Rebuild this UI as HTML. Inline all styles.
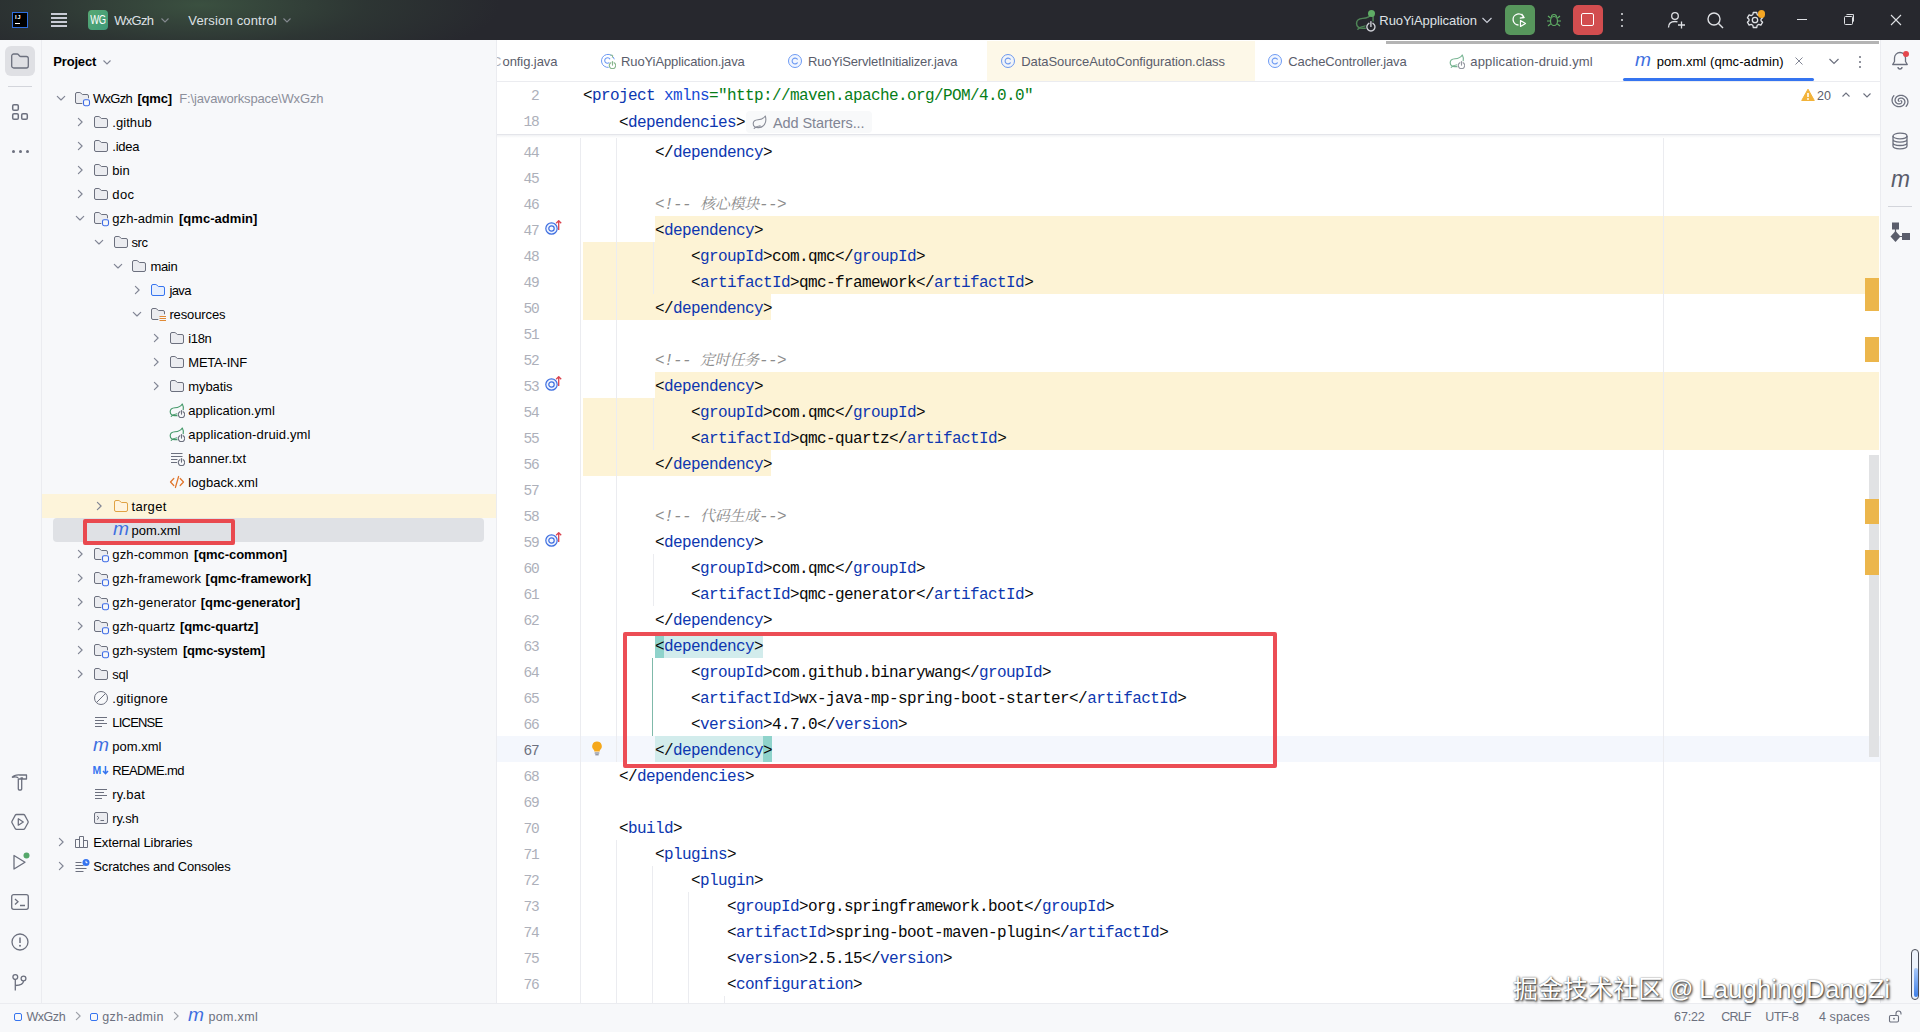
<!DOCTYPE html><html><head><meta charset="utf-8"><title>WxGzh – pom.xml (qmc-admin)</title><style>

html,body{margin:0;padding:0;}
body{width:1920px;height:1032px;overflow:hidden;position:relative;background:#f7f8fa;font-family:"Liberation Sans","Noto Sans CJK SC",sans-serif;font-size:13px;color:#000;}
.abs{position:absolute;}
.t{position:absolute;white-space:nowrap;line-height:24px;height:24px;margin-top:1px;}
svg{display:block;}
.ic{position:absolute;width:16px;height:16px;}
.row{position:absolute;left:0;height:24px;}
b{font-weight:bold;}
.code{position:absolute;left:583px;white-space:pre;font-family:"Liberation Mono","Noto Sans CJK SC",monospace;font-size:16px;letter-spacing:-0.600px;line-height:26px;height:26px;color:#080808;margin-top:2px;}
.ln{position:absolute;left:497px;width:41.500px;text-align:right;font-family:"Liberation Mono","Noto Sans CJK SC",monospace;font-size:14.500px;line-height:26px;height:26px;color:#adb0ba;letter-spacing:-1.200px;margin-top:2px;}
.cj{font-family:"Liberation Serif","Noto Serif CJK SC",serif;font-size:15px;letter-spacing:-0.250px;line-height:0;} .tg{color:#0d37b0;} .an{color:#174ad4;} .av{color:#067d17;} .cm{color:#8c8c8c;font-style:italic;}
.tab{position:absolute;top:50px;height:24px;line-height:24px;white-space:nowrap;color:#5a5d6b;}

</style></head><body>
<div class="abs" style="left:0;top:0;width:1920px;height:40px;background:#27282e;"></div>
<div class="abs" style="left:0;top:0;width:900px;height:40px;background:radial-gradient(ellipse 300px 70px at 200px 5px, rgba(78,120,82,0.500), rgba(66,100,70,0.220) 55%, rgba(39,40,46,0) 100%);"></div>
<div class="abs" style="left:12px;top:12px;width:14px;height:14px;background:#000;border:1px solid #2f6fe0;"></div>
<div class="abs" style="left:15px;top:14px;font:bold 6px/7px 'Liberation Sans',sans-serif;color:#fff;letter-spacing:0.500px;">IJ</div>
<div class="abs" style="left:15px;top:23px;width:5px;height:1px;background:#fff;"></div>
<div class="abs" style="left:51px;top:13px;width:16px;height:1.500px;background:#c9ccd6;"></div>
<div class="abs" style="left:51px;top:17px;width:16px;height:1.500px;background:#c9ccd6;"></div>
<div class="abs" style="left:51px;top:21px;width:16px;height:1.500px;background:#c9ccd6;"></div>
<div class="abs" style="left:51px;top:25px;width:16px;height:1.500px;background:#c9ccd6;"></div>
<div class="abs" style="left:88px;top:10px;width:20px;height:20px;border-radius:4px;background:linear-gradient(135deg,#57a873,#3f9a7a);"></div>
<div class="abs" style="left:88px;top:10px;width:20px;height:20px;line-height:20px;text-align:center;color:#fff;font-size:12px;letter-spacing:-0.500px;transform:scaleX(0.780);">WG</div>
<div class="t" style="left:114.300px;top:8px;color:#dfe1e5;"><span style="letter-spacing:-0.731px;">WxGzh</span></div>
<div class="ic" style="left:157px;top:12px;"><svg width="16" height="16" viewBox="0 0 16 16" ><path d='M4.500 6.500 L8 10 L11.500 6.500' fill='none' stroke='#868a91' stroke-width='1.100'/></svg></div>
<div class="t" style="left:188.300px;top:8px;color:#dfe1e5;"><span style="letter-spacing:0.171px;">Version control</span></div>
<div class="ic" style="left:279px;top:12px;"><svg width="16" height="16" viewBox="0 0 16 16" ><path d='M4.500 6.500 L8 10 L11.500 6.500' fill='none' stroke='#868a91' stroke-width='1.100'/></svg></div>
<div class="ic" style="left:1355px;top:11px;width:21px;height:21px;"><svg width="21" height="21" viewBox="0 0 16.500 16.500" ><path d="M13.300 2 C11.500 4.800 9 5.600 6 5.800 C3 6 1.200 7.600 1.200 9.800 C1.200 12.300 3.300 13.700 6 13.600 H9 M13.300 2 C14.300 3.800 14.600 5.800 14.200 7.800" fill="none" stroke="#4f8557" stroke-width="1.150" stroke-linecap="round" stroke-linejoin="round"/><path d="M2.200 14.400 C3.800 12.700 5.600 12 8.200 11.700" fill="none" stroke="#4f8557" stroke-width="1.050" stroke-linecap="round"/><circle cx="12.500" cy="12.400" r="4.300" fill="#27282e" stroke="none"/><path d="M10.900 9.700 a3.200 3.200 0 1 0 3.200 0" fill="none" stroke="#ced0d6" stroke-width="1.100" stroke-linecap="round"/><path d="M12.500 8.500 v3.600" stroke="#ced0d6" stroke-width="1.100" stroke-linecap="round"/></svg></div>
<div class="abs" style="left:1368px;top:9.500px;width:7px;height:7px;border-radius:50%;background:#5fad65;"></div>
<div class="t" style="left:1379.300px;top:8px;color:#dfe1e5;"><span style="letter-spacing:-0.055px;">RuoYiApplication</span></div>
<div class="ic" style="left:1479px;top:12px;"><svg width="16" height="16" viewBox="0 0 16 16" ><path d='M3.500 6 L8 10.500 L12.500 6' fill='none' stroke='#c9ccd6' stroke-width='1.200'/></svg></div>
<div class="abs" style="left:1505px;top:5px;width:30px;height:30px;border-radius:5px;background:#57965c;"></div>
<div class="ic" style="left:1511px;top:11px;width:18px;height:18px;"><svg width="18" height="18" viewBox="0 0 18 18" ><path d='M7.500 14 a5.500 5.500 0 1 1 5.200 -7.500' fill='none' stroke='#fff' stroke-width='1.300'/><path d='M10.500 2.800 l2.600 3.700 l-4.300 .6' fill='none' stroke='#fff' stroke-width='1.300' stroke-linejoin='round'/><path d='M9.500 9.500 v6 l5 -3 z' fill='#57965c' stroke='#fff' stroke-width='1.200' stroke-linejoin='round'/></svg></div>
<div class="ic" style="left:1546px;top:12px;"><svg width="16" height="16" viewBox="0 0 16 16" ><ellipse cx='8' cy='9' rx='3.500' ry='4.500' fill='none' stroke='#5fad65' stroke-width='1.200'/><path d='M5.500 5 a2.500 2.500 0 0 1 5 0 M1 9 h3.500 M11.500 9 h3.500 M2 4 l2.800 2.300 M14 4 l-2.800 2.300 M2 14 l2.800 -2.300 M14 14 l-2.800 -2.300' fill='none' stroke='#5fad65' stroke-width='1.200'/></svg></div>
<div class="abs" style="left:1573px;top:5px;width:30px;height:30px;border-radius:5px;background:#d24d4f;"></div>
<div class="abs" style="left:1581px;top:13px;width:11px;height:11px;border:1.500px solid #fff;border-radius:2px;"></div>
<div class="abs" style="left:1621px;top:13px;width:2px;height:2px;border-radius:50%;background:#dfe1e5;"></div>
<div class="abs" style="left:1621px;top:19px;width:2px;height:2px;border-radius:50%;background:#dfe1e5;"></div>
<div class="abs" style="left:1621px;top:25px;width:2px;height:2px;border-radius:50%;background:#dfe1e5;"></div>
<div class="ic" style="left:1666px;top:10px;width:20px;height:20px;"><svg width="20" height="20" viewBox="0 0 20 20" ><circle cx='9' cy='6' r='3.300' fill='none' stroke='#dfe1e5' stroke-width='1.300'/><path d='M2.500 17.500 c0 -4 2.800 -6 6.500 -6 c1 0 1.800 .15 2.500 .4' fill='none' stroke='#dfe1e5' stroke-width='1.300'/><path d='M15.500 11.500 v7 M12 15 h7' stroke='#dfe1e5' stroke-width='1.300'/></svg></div>
<div class="ic" style="left:1705px;top:10px;width:20px;height:20px;"><svg width="20" height="20" viewBox="0 0 20 20" ><circle cx='9' cy='9' r='6' fill='none' stroke='#dfe1e5' stroke-width='1.400'/><path d='M13.500 13.500 L18 18' stroke='#dfe1e5' stroke-width='1.400'/></svg></div>
<div class="ic" style="left:1745px;top:10px;width:20px;height:20px;"><svg width="20" height="20" viewBox="0 0 20 20" ><circle cx='10' cy='10' r='2.700' fill='none' stroke='#dfe1e5' stroke-width='1.300'/><path d='M8.300 2.500 h3.400 l.5 2.200 l1.600 .9 l2.100 -.7 l1.700 2.900 l-1.600 1.500 v1.400 l1.600 1.500 l-1.700 2.900 l-2.100 -.7 l-1.600 .9 l-.5 2.200 h-3.400 l-.5 -2.200 l-1.600 -.9 l-2.100 .7 l-1.700 -2.900 l1.600 -1.500 v-1.400 l-1.600 -1.500 l1.700 -2.900 l2.100 .7 l1.600 -.9 z' fill='none' stroke='#dfe1e5' stroke-width='1.300' stroke-linejoin='round'/></svg></div>
<div class="abs" style="left:1757.500px;top:10px;width:7.500px;height:7.500px;border-radius:50%;background:#f5a623;"></div>
<div class="abs" style="left:1797px;top:19px;width:10px;height:1px;background:#dfe1e5;"></div>
<div class="abs" style="left:1844px;top:16px;width:7px;height:7px;border:1px solid #dfe1e5;border-radius:1.500px;"></div>
<div class="abs" style="left:1846px;top:14px;width:7px;height:7px;border-top:1px solid #dfe1e5;border-right:1px solid #dfe1e5;border-radius:1.500px;"></div>
<div class="ic" style="left:1888px;top:12px;"><svg width="16" height="16" viewBox="0 0 16 16" ><path d='M3 3 L13 13 M13 3 L3 13' stroke='#dfe1e5' stroke-width='1.100'/></svg></div>
<div class="abs" style="left:41px;top:40px;width:1px;height:963px;background:#ebecf0;"></div>
<div class="abs" style="left:5px;top:46px;width:30px;height:30px;border-radius:6px;background:#dfe0e4;"></div>
<div class="ic" style="left:10px;top:51px;width:20px;height:20px;"><svg width="20" height="20" viewBox="0 0 20 20" ><path d='M1.700 5 a2 2 0 0 1 2 -2 h3.500 a1.500 1.500 0 0 1 1.100 .5 l1.300 1.500 a1.500 1.500 0 0 0 1.100 .5 h5.600 a2 2 0 0 1 2 2 v7.500 a2 2 0 0 1 -2 2 h-12.600 a2 2 0 0 1 -2 -2 z' fill='none' stroke='#6c707e' stroke-width='1.300'/></svg></div>
<div class="abs" style="left:8px;top:86px;width:24px;height:1px;background:#d3d5db;"></div>
<div class="ic" style="left:10px;top:102px;width:20px;height:20px;"><svg width="20" height="20" viewBox="0 0 20 20" ><rect x='2.700' y='2.700' width='5.600' height='5.600' rx='1.300' fill='none' stroke='#6c707e' stroke-width='1.500'/><rect x='2.700' y='11.700' width='5.600' height='5.600' rx='1.300' fill='none' stroke='#6c707e' stroke-width='1.500'/><rect x='11.700' y='11.700' width='5.600' height='5.600' rx='1.300' fill='none' stroke='#6c707e' stroke-width='1.500'/></svg></div>
<div class="abs" style="left:11.7px;top:150.200px;width:3.200px;height:3.200px;border-radius:50%;background:#6c707e;"></div>
<div class="abs" style="left:18.7px;top:150.200px;width:3.200px;height:3.200px;border-radius:50%;background:#6c707e;"></div>
<div class="abs" style="left:25.7px;top:150.200px;width:3.200px;height:3.200px;border-radius:50%;background:#6c707e;"></div>
<div class="ic" style="left:10px;top:772px;width:20px;height:20px;"><svg width="20" height="20" viewBox="0 0 20 20" ><path d='M2 5.500 c2 -2.300 5 -2.800 8 -2.500 h6.500 v4 h-4 v-1.200 h-2 M8.300 7 h3.400 v10 a1 1 0 0 1 -1 1 h-1.400 a1 1 0 0 1 -1 -1 z M2 5.500 c2.500 -1 4.500 -.8 6.300 .2' fill='none' stroke='#6c707e' stroke-width='1.300' stroke-linejoin='round'/></svg></div>
<div class="ic" style="left:10px;top:812px;width:20px;height:20px;"><svg width="20" height="20" viewBox="0 0 20 20" ><path d='M6.500 2.500 h7 a1.500 1.500 0 0 1 1.200 .7 l3.300 6 a1.500 1.500 0 0 1 0 1.500 l-3.300 6 a1.500 1.500 0 0 1 -1.200 .7 h-7 a1.500 1.500 0 0 1 -1.200 -.7 l-3.300 -6 a1.500 1.500 0 0 1 0 -1.500 l3.300 -6 a1.500 1.500 0 0 1 1.200 -.7 z' fill='none' stroke='#6c707e' stroke-width='1.300'/><path d='M8.300 6.800 v6.400 l5 -3.200 z' fill='none' stroke='#6c707e' stroke-width='1.300' stroke-linejoin='round'/></svg></div>
<div class="ic" style="left:10px;top:852px;width:20px;height:20px;"><svg width="20" height="20" viewBox="0 0 20 20" ><path d='M4 3.500 v13.500 l11 -6.800 z' fill='none' stroke='#6c707e' stroke-width='1.300' stroke-linejoin='round'/><circle cx='16.500' cy='3.500' r='3' fill='#55a76a'/></svg></div>
<div class="ic" style="left:10px;top:892px;width:20px;height:20px;"><svg width="20" height="20" viewBox="0 0 20 20" ><rect x='1.700' y='2.700' width='16.600' height='14.600' rx='2' fill='none' stroke='#6c707e' stroke-width='1.300'/><path d='M5 7 l3 2.800 l-3 2.800 M10 13.500 h5' fill='none' stroke='#6c707e' stroke-width='1.300'/></svg></div>
<div class="ic" style="left:10px;top:932px;width:20px;height:20px;"><svg width="20" height="20" viewBox="0 0 20 20" ><circle cx='10' cy='10' r='8' fill='none' stroke='#6c707e' stroke-width='1.300'/><path d='M10 5.500 v5.500' stroke='#6c707e' stroke-width='1.500'/><circle cx='10' cy='13.800' r='1' fill='#6c707e'/></svg></div>
<div class="ic" style="left:10px;top:972px;width:20px;height:20px;"><svg width="20" height="20" viewBox="0 0 20 20" ><circle cx='5.300' cy='5' r='2.400' fill='none' stroke='#6c707e' stroke-width='1.300'/><circle cx='13.500' cy='6.500' r='2.400' fill='none' stroke='#6c707e' stroke-width='1.300'/><path d='M5.300 7.400 v11 M13.500 8.900 c0 3.200 -3.500 4.300 -8.200 4.600' fill='none' stroke='#6c707e' stroke-width='1.300'/></svg></div>
<div class="t" style="left:53.300px;top:49px;color:#000;"><span style="letter-spacing:-0.180px;font-weight:bold;">Project</span></div>
<div class="ic" style="left:99px;top:54px;"><svg width="16" height="16" viewBox="0 0 16 16" ><path d='M4.500 6.500 L8 10 L11.500 6.500' fill='none' stroke='#818594' stroke-width='1.100'/></svg></div>
<div class="abs" style="left:42px;top:494px;width:454px;height:24px;background:#fdf4da;"></div>
<div class="abs" style="left:53px;top:518px;width:431px;height:24px;border-radius:4px;background:#dfe1e5;"></div>
<div class="ic" style="left:53px;top:90px;"><svg width="16" height="16" viewBox="0 0 16 16" ><path d="M4.300 6.300 L8 10 L11.700 6.300" fill="none" stroke="#818594" stroke-width="1.150" stroke-linecap="round" stroke-linejoin="round"/></svg></div>
<div class="ic" style="left:74px;top:90px;"><svg width="17" height="17" viewBox="0 0 17 17" ><path d="M8.3 13.5 H3 a1.5 1.5 0 0 1 -1.5 -1.5 V4 a1.5 1.5 0 0 1 1.5 -1.5 h2.9 a1 1 0 0 1 .75 .33 l1.2 1.37 a1 1 0 0 0 .75 .3 h4.4 a1.5 1.5 0 0 1 1.5 1.5 V8.300" fill="#ebecf0" stroke="#6c707e"/><rect x="9.500" y="9.700" width="6" height="6" rx="1.600" fill="#f7f8fa" stroke="#3d6be6" stroke-width="1.100"/></svg></div>
<div class="t" style="left:93px;top:86px;"><span style="letter-spacing:-0.706px;">WxGzh</span><span style="position:absolute;left:44.4px;top:0;"><span style="letter-spacing:-0.198px;font-weight:bold;">[qmc]</span></span><span style="position:absolute;left:86.3px;top:0;color:#8c8f9b;"><span style="letter-spacing:-0.151px;">F:\javaworkspace\WxGzh</span></span></div>
<div class="ic" style="left:72px;top:114px;"><svg width="16" height="16" viewBox="0 0 16 16" ><path d="M6.400 4.300 L10.100 8 L6.400 11.700" fill="none" stroke="#818594" stroke-width="1.150" stroke-linecap="round" stroke-linejoin="round"/></svg></div>
<div class="ic" style="left:93px;top:114px;"><svg width="16" height="16" viewBox="0 0 16 16" ><path d="M1.5 4 a1.5 1.5 0 0 1 1.5 -1.5 h2.9 a1 1 0 0 1 .75 .33 l1.2 1.37 a1 1 0 0 0 .75 .3 h4.4 a1.5 1.5 0 0 1 1.5 1.5 v6 a1.5 1.5 0 0 1 -1.5 1.5 h-10 a1.5 1.5 0 0 1 -1.5 -1.5 z" fill="#ebecf0" stroke="#6c707e" stroke-width="1"/></svg></div>
<div class="t" style="left:112.3px;top:110px;"><span style="letter-spacing:0.059px;">.github</span></div>
<div class="ic" style="left:72px;top:138px;"><svg width="16" height="16" viewBox="0 0 16 16" ><path d="M6.400 4.300 L10.100 8 L6.400 11.700" fill="none" stroke="#818594" stroke-width="1.150" stroke-linecap="round" stroke-linejoin="round"/></svg></div>
<div class="ic" style="left:93px;top:138px;"><svg width="16" height="16" viewBox="0 0 16 16" ><path d="M1.5 4 a1.5 1.5 0 0 1 1.5 -1.5 h2.9 a1 1 0 0 1 .75 .33 l1.2 1.37 a1 1 0 0 0 .75 .3 h4.4 a1.5 1.5 0 0 1 1.5 1.5 v6 a1.5 1.5 0 0 1 -1.5 1.5 h-10 a1.5 1.5 0 0 1 -1.5 -1.5 z" fill="#ebecf0" stroke="#6c707e" stroke-width="1"/></svg></div>
<div class="t" style="left:112.3px;top:134px;"><span style="letter-spacing:-0.226px;">.idea</span></div>
<div class="ic" style="left:72px;top:162px;"><svg width="16" height="16" viewBox="0 0 16 16" ><path d="M6.400 4.300 L10.100 8 L6.400 11.700" fill="none" stroke="#818594" stroke-width="1.150" stroke-linecap="round" stroke-linejoin="round"/></svg></div>
<div class="ic" style="left:93px;top:162px;"><svg width="16" height="16" viewBox="0 0 16 16" ><path d="M1.5 4 a1.5 1.5 0 0 1 1.5 -1.5 h2.9 a1 1 0 0 1 .75 .33 l1.2 1.37 a1 1 0 0 0 .75 .3 h4.4 a1.5 1.5 0 0 1 1.5 1.5 v6 a1.5 1.5 0 0 1 -1.5 1.5 h-10 a1.5 1.5 0 0 1 -1.5 -1.5 z" fill="#ebecf0" stroke="#6c707e" stroke-width="1"/></svg></div>
<div class="t" style="left:112.3px;top:158px;"><span style="letter-spacing:0.020px;">bin</span></div>
<div class="ic" style="left:72px;top:186px;"><svg width="16" height="16" viewBox="0 0 16 16" ><path d="M6.400 4.300 L10.100 8 L6.400 11.700" fill="none" stroke="#818594" stroke-width="1.150" stroke-linecap="round" stroke-linejoin="round"/></svg></div>
<div class="ic" style="left:93px;top:186px;"><svg width="16" height="16" viewBox="0 0 16 16" ><path d="M1.5 4 a1.5 1.5 0 0 1 1.5 -1.5 h2.9 a1 1 0 0 1 .75 .33 l1.2 1.37 a1 1 0 0 0 .75 .3 h4.4 a1.5 1.5 0 0 1 1.5 1.5 v6 a1.5 1.5 0 0 1 -1.5 1.5 h-10 a1.5 1.5 0 0 1 -1.5 -1.5 z" fill="#ebecf0" stroke="#6c707e" stroke-width="1"/></svg></div>
<div class="t" style="left:112.3px;top:182px;"><span style="letter-spacing:0.366px;">doc</span></div>
<div class="ic" style="left:72px;top:210px;"><svg width="16" height="16" viewBox="0 0 16 16" ><path d="M4.300 6.300 L8 10 L11.700 6.300" fill="none" stroke="#818594" stroke-width="1.150" stroke-linecap="round" stroke-linejoin="round"/></svg></div>
<div class="ic" style="left:93px;top:210px;"><svg width="17" height="17" viewBox="0 0 17 17" ><path d="M8.3 13.5 H3 a1.5 1.5 0 0 1 -1.5 -1.5 V4 a1.5 1.5 0 0 1 1.5 -1.5 h2.9 a1 1 0 0 1 .75 .33 l1.2 1.37 a1 1 0 0 0 .75 .3 h4.4 a1.5 1.5 0 0 1 1.5 1.5 V8.300" fill="#ebecf0" stroke="#6c707e"/><rect x="9.500" y="9.700" width="6" height="6" rx="1.600" fill="#f7f8fa" stroke="#3d6be6" stroke-width="1.100"/></svg></div>
<div class="t" style="left:112.3px;top:206px;"><span style="letter-spacing:0.050px;">gzh-admin</span><span style="position:absolute;left:66.7px;top:0;"><span style="letter-spacing:0.040px;font-weight:bold;">[qmc-admin]</span></span></div>
<div class="ic" style="left:91px;top:234px;"><svg width="16" height="16" viewBox="0 0 16 16" ><path d="M4.300 6.300 L8 10 L11.700 6.300" fill="none" stroke="#818594" stroke-width="1.150" stroke-linecap="round" stroke-linejoin="round"/></svg></div>
<div class="ic" style="left:113px;top:234px;"><svg width="16" height="16" viewBox="0 0 16 16" ><path d="M1.5 4 a1.5 1.5 0 0 1 1.5 -1.5 h2.9 a1 1 0 0 1 .75 .33 l1.2 1.37 a1 1 0 0 0 .75 .3 h4.4 a1.5 1.5 0 0 1 1.5 1.5 v6 a1.5 1.5 0 0 1 -1.5 1.5 h-10 a1.5 1.5 0 0 1 -1.5 -1.5 z" fill="#ebecf0" stroke="#6c707e" stroke-width="1"/></svg></div>
<div class="t" style="left:131.5px;top:230px;"><span style="letter-spacing:-0.422px;">src</span></div>
<div class="ic" style="left:110px;top:258px;"><svg width="16" height="16" viewBox="0 0 16 16" ><path d="M4.300 6.300 L8 10 L11.700 6.300" fill="none" stroke="#818594" stroke-width="1.150" stroke-linecap="round" stroke-linejoin="round"/></svg></div>
<div class="ic" style="left:131px;top:258px;"><svg width="16" height="16" viewBox="0 0 16 16" ><path d="M1.5 4 a1.5 1.5 0 0 1 1.5 -1.5 h2.9 a1 1 0 0 1 .75 .33 l1.2 1.37 a1 1 0 0 0 .75 .3 h4.4 a1.5 1.5 0 0 1 1.5 1.5 v6 a1.5 1.5 0 0 1 -1.5 1.5 h-10 a1.5 1.5 0 0 1 -1.5 -1.5 z" fill="#ebecf0" stroke="#6c707e" stroke-width="1"/></svg></div>
<div class="t" style="left:150.4px;top:254px;"><span style="letter-spacing:-0.296px;">main</span></div>
<div class="ic" style="left:129px;top:282px;"><svg width="16" height="16" viewBox="0 0 16 16" ><path d="M6.400 4.300 L10.100 8 L6.400 11.700" fill="none" stroke="#818594" stroke-width="1.150" stroke-linecap="round" stroke-linejoin="round"/></svg></div>
<div class="ic" style="left:150px;top:282px;"><svg width="16" height="16" viewBox="0 0 16 16" ><path d="M1.5 4 a1.5 1.5 0 0 1 1.5 -1.5 h2.9 a1 1 0 0 1 .75 .33 l1.2 1.37 a1 1 0 0 0 .75 .3 h4.4 a1.5 1.5 0 0 1 1.5 1.5 v6 a1.5 1.5 0 0 1 -1.5 1.5 h-10 a1.5 1.5 0 0 1 -1.5 -1.5 z" fill="#e7effd" stroke="#3574f0" stroke-width="1"/></svg></div>
<div class="t" style="left:169.4px;top:278px;"><span style="letter-spacing:-0.620px;">java</span></div>
<div class="ic" style="left:129px;top:306px;"><svg width="16" height="16" viewBox="0 0 16 16" ><path d="M4.300 6.300 L8 10 L11.700 6.300" fill="none" stroke="#818594" stroke-width="1.150" stroke-linecap="round" stroke-linejoin="round"/></svg></div>
<div class="ic" style="left:150px;top:306px;"><svg width="17" height="17" viewBox="0 0 17 17" ><path d="M8.3 13.5 H3 a1.5 1.5 0 0 1 -1.5 -1.5 V4 a1.5 1.5 0 0 1 1.5 -1.5 h2.9 a1 1 0 0 1 .75 .33 l1.2 1.37 a1 1 0 0 0 .75 .3 h4.4 a1.5 1.5 0 0 1 1.5 1.5 V8.300" fill="#ebecf0" stroke="#6c707e"/><path d="M9.500 10.500 h6.500 M9.500 12.500 h6.500 M9.500 14.500 h6.500" stroke="#e08a35" stroke-width="1.100"/></svg></div>
<div class="t" style="left:169.4px;top:302px;"><span style="letter-spacing:-0.122px;">resources</span></div>
<div class="ic" style="left:148px;top:330px;"><svg width="16" height="16" viewBox="0 0 16 16" ><path d="M6.400 4.300 L10.100 8 L6.400 11.700" fill="none" stroke="#818594" stroke-width="1.150" stroke-linecap="round" stroke-linejoin="round"/></svg></div>
<div class="ic" style="left:169px;top:330px;"><svg width="16" height="16" viewBox="0 0 16 16" ><path d="M1.5 4 a1.5 1.5 0 0 1 1.5 -1.5 h2.9 a1 1 0 0 1 .75 .33 l1.2 1.37 a1 1 0 0 0 .75 .3 h4.4 a1.5 1.5 0 0 1 1.5 1.5 v6 a1.5 1.5 0 0 1 -1.5 1.5 h-10 a1.5 1.5 0 0 1 -1.5 -1.5 z" fill="#ebecf0" stroke="#6c707e" stroke-width="1"/></svg></div>
<div class="t" style="left:188.3px;top:326px;"><span style="letter-spacing:-0.359px;">i18n</span></div>
<div class="ic" style="left:148px;top:354px;"><svg width="16" height="16" viewBox="0 0 16 16" ><path d="M6.400 4.300 L10.100 8 L6.400 11.700" fill="none" stroke="#818594" stroke-width="1.150" stroke-linecap="round" stroke-linejoin="round"/></svg></div>
<div class="ic" style="left:169px;top:354px;"><svg width="16" height="16" viewBox="0 0 16 16" ><path d="M1.5 4 a1.5 1.5 0 0 1 1.5 -1.5 h2.9 a1 1 0 0 1 .75 .33 l1.2 1.37 a1 1 0 0 0 .75 .3 h4.4 a1.5 1.5 0 0 1 1.5 1.5 v6 a1.5 1.5 0 0 1 -1.5 1.5 h-10 a1.5 1.5 0 0 1 -1.5 -1.5 z" fill="#ebecf0" stroke="#6c707e" stroke-width="1"/></svg></div>
<div class="t" style="left:188.3px;top:350px;"><span style="letter-spacing:-0.217px;">META-INF</span></div>
<div class="ic" style="left:148px;top:378px;"><svg width="16" height="16" viewBox="0 0 16 16" ><path d="M6.400 4.300 L10.100 8 L6.400 11.700" fill="none" stroke="#818594" stroke-width="1.150" stroke-linecap="round" stroke-linejoin="round"/></svg></div>
<div class="ic" style="left:169px;top:378px;"><svg width="16" height="16" viewBox="0 0 16 16" ><path d="M1.5 4 a1.5 1.5 0 0 1 1.5 -1.5 h2.9 a1 1 0 0 1 .75 .33 l1.2 1.37 a1 1 0 0 0 .75 .3 h4.4 a1.5 1.5 0 0 1 1.5 1.5 v6 a1.5 1.5 0 0 1 -1.5 1.5 h-10 a1.5 1.5 0 0 1 -1.5 -1.5 z" fill="#ebecf0" stroke="#6c707e" stroke-width="1"/></svg></div>
<div class="t" style="left:188.3px;top:374px;"><span style="letter-spacing:-0.083px;">mybatis</span></div>
<div class="ic" style="left:169px;top:402px;"><svg width="16" height="16" viewBox="0 0 16 16" ><path d="M13.300 2 C11.500 4.800 9 5.600 6 5.800 C3 6 1.200 7.600 1.200 9.800 C1.200 12.300 3.300 13.700 6 13.600 H9 M13.300 2 C14.300 3.800 14.600 5.800 14.200 7.800" fill="none" stroke="#45996a" stroke-width="1.150" stroke-linecap="round" stroke-linejoin="round"/><path d="M2.200 14.400 C3.800 12.700 5.600 12 8.200 11.700" fill="none" stroke="#45996a" stroke-width="1.050" stroke-linecap="round"/><circle cx="12.500" cy="12.400" r="4.300" fill="#f7f8fa" stroke="none"/><path d="M10.900 9.700 a3.200 3.200 0 1 0 3.200 0" fill="none" stroke="#6c707e" stroke-width="1.100" stroke-linecap="round"/><path d="M12.500 8.500 v3.600" stroke="#6c707e" stroke-width="1.100" stroke-linecap="round"/></svg></div>
<div class="t" style="left:188.3px;top:398px;"><span style="letter-spacing:0.036px;">application.yml</span></div>
<div class="ic" style="left:169px;top:426px;"><svg width="16" height="16" viewBox="0 0 16 16" ><path d="M13.300 2 C11.500 4.800 9 5.600 6 5.800 C3 6 1.200 7.600 1.200 9.800 C1.200 12.300 3.300 13.700 6 13.600 H9 M13.300 2 C14.300 3.800 14.600 5.800 14.200 7.800" fill="none" stroke="#45996a" stroke-width="1.150" stroke-linecap="round" stroke-linejoin="round"/><path d="M2.200 14.400 C3.800 12.700 5.600 12 8.200 11.700" fill="none" stroke="#45996a" stroke-width="1.050" stroke-linecap="round"/><circle cx="12.500" cy="12.400" r="4.300" fill="#f7f8fa" stroke="none"/><path d="M10.900 9.700 a3.200 3.200 0 1 0 3.200 0" fill="none" stroke="#6c707e" stroke-width="1.100" stroke-linecap="round"/><path d="M12.500 8.500 v3.600" stroke="#6c707e" stroke-width="1.100" stroke-linecap="round"/></svg></div>
<div class="t" style="left:188.3px;top:422px;"><span style="letter-spacing:0.148px;">application-druid.yml</span></div>
<div class="ic" style="left:169px;top:450px;"><svg width="16" height="16" viewBox="0 0 16 16" ><path d="M2 3.500 h11.500 M2 6.500 h11.500 M2 9.500 h6.500 M2 12.500 h6" stroke="#6c707e" stroke-width="1"/><circle cx="12.500" cy="12.400" r="4.300" fill="#f7f8fa" stroke="none"/><path d="M10.900 9.700 a3.200 3.200 0 1 0 3.200 0" fill="none" stroke="#6c707e" stroke-width="1.100" stroke-linecap="round"/><path d="M12.500 8.500 v3.600" stroke="#6c707e" stroke-width="1.100" stroke-linecap="round"/></svg></div>
<div class="t" style="left:188.3px;top:446px;"><span style="letter-spacing:0.066px;">banner.txt</span></div>
<div class="ic" style="left:169px;top:474px;"><svg width="16" height="16" viewBox="0 0 16 16" ><path d="M4.800 4.500 L1.500 8 L4.800 11.500 M11.200 4.500 L14.500 8 L11.200 11.500 M9.600 2.500 L6.400 13.500" fill="none" stroke="#e0762c" stroke-width="1.250" stroke-linecap="round" stroke-linejoin="round"/></svg></div>
<div class="t" style="left:188.3px;top:470px;"><span style="letter-spacing:0.086px;">logback.xml</span></div>
<div class="ic" style="left:91px;top:498px;"><svg width="16" height="16" viewBox="0 0 16 16" ><path d="M6.400 4.300 L10.100 8 L6.400 11.700" fill="none" stroke="#818594" stroke-width="1.150" stroke-linecap="round" stroke-linejoin="round"/></svg></div>
<div class="ic" style="left:113px;top:498px;"><svg width="16" height="16" viewBox="0 0 16 16" ><path d="M1.5 4 a1.5 1.5 0 0 1 1.5 -1.5 h2.9 a1 1 0 0 1 .75 .33 l1.2 1.37 a1 1 0 0 0 .75 .3 h4.4 a1.5 1.5 0 0 1 1.5 1.5 v6 a1.5 1.5 0 0 1 -1.5 1.5 h-10 a1.5 1.5 0 0 1 -1.5 -1.5 z" fill="#fff4de" stroke="#e0a243" stroke-width="1"/></svg></div>
<div class="t" style="left:131.5px;top:494px;"><span style="letter-spacing:0.310px;">target</span></div>
<div class="ic" style="left:113px;top:522px;"><svg width="17" height="16" viewBox="0 0 17 16" ><text x="0" y="13" font-family='"Liberation Sans",sans-serif' font-style="italic" font-size="18" fill="#3e6fe0" textLength="16" lengthAdjust="spacingAndGlyphs">m</text></svg></div>
<div class="t" style="left:131.5px;top:518px;"><span style="letter-spacing:-0.021px;">pom.xml</span></div>
<div class="ic" style="left:72px;top:546px;"><svg width="16" height="16" viewBox="0 0 16 16" ><path d="M6.400 4.300 L10.100 8 L6.400 11.700" fill="none" stroke="#818594" stroke-width="1.150" stroke-linecap="round" stroke-linejoin="round"/></svg></div>
<div class="ic" style="left:93px;top:546px;"><svg width="17" height="17" viewBox="0 0 17 17" ><path d="M8.3 13.5 H3 a1.5 1.5 0 0 1 -1.5 -1.5 V4 a1.5 1.5 0 0 1 1.5 -1.5 h2.9 a1 1 0 0 1 .75 .33 l1.2 1.37 a1 1 0 0 0 .75 .3 h4.4 a1.5 1.5 0 0 1 1.5 1.5 V8.300" fill="#ebecf0" stroke="#6c707e"/><rect x="9.500" y="9.700" width="6" height="6" rx="1.600" fill="#f7f8fa" stroke="#3d6be6" stroke-width="1.100"/></svg></div>
<div class="t" style="left:112.3px;top:542px;"><span style="letter-spacing:0.129px;">gzh-common</span><span style="position:absolute;left:81.6px;top:0;"><span style="letter-spacing:-0.054px;font-weight:bold;">[qmc-common]</span></span></div>
<div class="ic" style="left:72px;top:570px;"><svg width="16" height="16" viewBox="0 0 16 16" ><path d="M6.400 4.300 L10.100 8 L6.400 11.700" fill="none" stroke="#818594" stroke-width="1.150" stroke-linecap="round" stroke-linejoin="round"/></svg></div>
<div class="ic" style="left:93px;top:570px;"><svg width="17" height="17" viewBox="0 0 17 17" ><path d="M8.3 13.5 H3 a1.5 1.5 0 0 1 -1.5 -1.5 V4 a1.5 1.5 0 0 1 1.5 -1.5 h2.9 a1 1 0 0 1 .75 .33 l1.2 1.37 a1 1 0 0 0 .75 .3 h4.4 a1.5 1.5 0 0 1 1.5 1.5 V8.300" fill="#ebecf0" stroke="#6c707e"/><rect x="9.500" y="9.700" width="6" height="6" rx="1.600" fill="#f7f8fa" stroke="#3d6be6" stroke-width="1.100"/></svg></div>
<div class="t" style="left:112.3px;top:566px;"><span style="letter-spacing:0.228px;">gzh-framework</span><span style="position:absolute;left:93.3px;top:0;"><span style="letter-spacing:0.002px;font-weight:bold;">[qmc-framework]</span></span></div>
<div class="ic" style="left:72px;top:594px;"><svg width="16" height="16" viewBox="0 0 16 16" ><path d="M6.400 4.300 L10.100 8 L6.400 11.700" fill="none" stroke="#818594" stroke-width="1.150" stroke-linecap="round" stroke-linejoin="round"/></svg></div>
<div class="ic" style="left:93px;top:594px;"><svg width="17" height="17" viewBox="0 0 17 17" ><path d="M8.3 13.5 H3 a1.5 1.5 0 0 1 -1.5 -1.5 V4 a1.5 1.5 0 0 1 1.5 -1.5 h2.9 a1 1 0 0 1 .75 .33 l1.2 1.37 a1 1 0 0 0 .75 .3 h4.4 a1.5 1.5 0 0 1 1.5 1.5 V8.300" fill="#ebecf0" stroke="#6c707e"/><rect x="9.500" y="9.700" width="6" height="6" rx="1.600" fill="#f7f8fa" stroke="#3d6be6" stroke-width="1.100"/></svg></div>
<div class="t" style="left:112.3px;top:590px;"><span style="letter-spacing:0.229px;">gzh-generator</span><span style="position:absolute;left:88.4px;top:0;"><span style="letter-spacing:-0.013px;font-weight:bold;">[qmc-generator]</span></span></div>
<div class="ic" style="left:72px;top:618px;"><svg width="16" height="16" viewBox="0 0 16 16" ><path d="M6.400 4.300 L10.100 8 L6.400 11.700" fill="none" stroke="#818594" stroke-width="1.150" stroke-linecap="round" stroke-linejoin="round"/></svg></div>
<div class="ic" style="left:93px;top:618px;"><svg width="17" height="17" viewBox="0 0 17 17" ><path d="M8.3 13.5 H3 a1.5 1.5 0 0 1 -1.5 -1.5 V4 a1.5 1.5 0 0 1 1.5 -1.5 h2.9 a1 1 0 0 1 .75 .33 l1.2 1.37 a1 1 0 0 0 .75 .3 h4.4 a1.5 1.5 0 0 1 1.5 1.5 V8.300" fill="#ebecf0" stroke="#6c707e"/><rect x="9.500" y="9.700" width="6" height="6" rx="1.600" fill="#f7f8fa" stroke="#3d6be6" stroke-width="1.100"/></svg></div>
<div class="t" style="left:112.3px;top:614px;"><span style="letter-spacing:0.164px;">gzh-quartz</span><span style="position:absolute;left:67.6px;top:0;"><span style="letter-spacing:-0.020px;font-weight:bold;">[qmc-quartz]</span></span></div>
<div class="ic" style="left:72px;top:642px;"><svg width="16" height="16" viewBox="0 0 16 16" ><path d="M6.400 4.300 L10.100 8 L6.400 11.700" fill="none" stroke="#818594" stroke-width="1.150" stroke-linecap="round" stroke-linejoin="round"/></svg></div>
<div class="ic" style="left:93px;top:642px;"><svg width="17" height="17" viewBox="0 0 17 17" ><path d="M8.3 13.5 H3 a1.5 1.5 0 0 1 -1.5 -1.5 V4 a1.5 1.5 0 0 1 1.5 -1.5 h2.9 a1 1 0 0 1 .75 .33 l1.2 1.37 a1 1 0 0 0 .75 .3 h4.4 a1.5 1.5 0 0 1 1.5 1.5 V8.300" fill="#ebecf0" stroke="#6c707e"/><rect x="9.500" y="9.700" width="6" height="6" rx="1.600" fill="#f7f8fa" stroke="#3d6be6" stroke-width="1.100"/></svg></div>
<div class="t" style="left:112.3px;top:638px;"><span style="letter-spacing:-0.119px;">gzh-system</span><span style="position:absolute;left:70.7px;top:0;"><span style="letter-spacing:-0.212px;font-weight:bold;">[qmc-system]</span></span></div>
<div class="ic" style="left:72px;top:666px;"><svg width="16" height="16" viewBox="0 0 16 16" ><path d="M6.400 4.300 L10.100 8 L6.400 11.700" fill="none" stroke="#818594" stroke-width="1.150" stroke-linecap="round" stroke-linejoin="round"/></svg></div>
<div class="ic" style="left:93px;top:666px;"><svg width="16" height="16" viewBox="0 0 16 16" ><path d="M1.5 4 a1.5 1.5 0 0 1 1.5 -1.5 h2.9 a1 1 0 0 1 .75 .33 l1.2 1.37 a1 1 0 0 0 .75 .3 h4.4 a1.5 1.5 0 0 1 1.5 1.5 v6 a1.5 1.5 0 0 1 -1.5 1.5 h-10 a1.5 1.5 0 0 1 -1.5 -1.5 z" fill="#ebecf0" stroke="#6c707e" stroke-width="1"/></svg></div>
<div class="t" style="left:112.3px;top:662px;"><span style="letter-spacing:-0.262px;">sql</span></div>
<div class="ic" style="left:93px;top:690px;"><svg width="16" height="16" viewBox="0 0 16 16" ><circle cx="8" cy="8" r="6.500" fill="none" stroke="#6c707e"/><path d="M3.600 12.400 L12.400 3.600" stroke="#6c707e"/></svg></div>
<div class="t" style="left:112.3px;top:686px;"><span style="letter-spacing:0.224px;">.gitignore</span></div>
<div class="ic" style="left:93px;top:714px;"><svg width="16" height="16" viewBox="0 0 16 16" ><path d="M2 3.500 h12 M2 6.500 h9 M2 9.500 h12 M2 12.500 h7" stroke="#6c707e" stroke-width="1"/></svg></div>
<div class="t" style="left:112.3px;top:710px;"><span style="letter-spacing:-0.800px;">LICENSE</span></div>
<div class="ic" style="left:93px;top:738px;"><svg width="17" height="16" viewBox="0 0 17 16" ><text x="0" y="13" font-family='"Liberation Sans",sans-serif' font-style="italic" font-size="18" fill="#3e6fe0" textLength="16" lengthAdjust="spacingAndGlyphs">m</text></svg></div>
<div class="t" style="left:112.3px;top:734px;"><span style="letter-spacing:0.013px;">pom.xml</span></div>
<div class="ic" style="left:93px;top:762px;"><svg width="16" height="16" viewBox="0 0 16 16" ><text x="-0.500" y="12" font-family='"Liberation Sans",sans-serif' font-weight="bold" font-size="10.500" fill="#3574f0">M</text><path d="M12.500 4 v7.500 M10 9 l2.500 2.700 l2.500 -2.700" fill="none" stroke="#3574f0" stroke-width="1.500"/></svg></div>
<div class="t" style="left:112.3px;top:758px;"><span style="letter-spacing:-0.650px;">README.md</span></div>
<div class="ic" style="left:93px;top:786px;"><svg width="16" height="16" viewBox="0 0 16 16" ><path d="M2 3.500 h12 M2 6.500 h9 M2 9.500 h12 M2 12.500 h7" stroke="#6c707e" stroke-width="1"/></svg></div>
<div class="t" style="left:112.3px;top:782px;"><span style="letter-spacing:0.188px;">ry.bat</span></div>
<div class="ic" style="left:93px;top:810px;"><svg width="16" height="16" viewBox="0 0 16 16" ><rect x="1.500" y="2.500" width="13" height="11" rx="1.500" fill="#ebecf0" stroke="#6c707e"/><path d="M4 6 l2 1.800 l-2 1.800 M7.500 10.500 h3.500" fill="none" stroke="#6c707e" stroke-width="1"/></svg></div>
<div class="t" style="left:112.3px;top:806px;"><span style="letter-spacing:-0.205px;">ry.sh</span></div>
<div class="ic" style="left:53px;top:834px;"><svg width="16" height="16" viewBox="0 0 16 16" ><path d="M6.400 4.300 L10.100 8 L6.400 11.700" fill="none" stroke="#818594" stroke-width="1.150" stroke-linecap="round" stroke-linejoin="round"/></svg></div>
<div class="ic" style="left:74px;top:834px;"><svg width="16" height="16" viewBox="0 0 16 16" ><path d="M1.500 13.500 v-8 h4 v8 z M5.500 13.500 v-11 h4 v11 z M9.500 13.500 v-7 h4 v7 z" fill="none" stroke="#6c707e" stroke-width="1"/></svg></div>
<div class="t" style="left:93.3px;top:830px;"><span style="letter-spacing:-0.121px;">External Libraries</span></div>
<div class="ic" style="left:53px;top:858px;"><svg width="16" height="16" viewBox="0 0 16 16" ><path d="M6.400 4.300 L10.100 8 L6.400 11.700" fill="none" stroke="#818594" stroke-width="1.150" stroke-linecap="round" stroke-linejoin="round"/></svg></div>
<div class="ic" style="left:74px;top:858px;"><svg width="16" height="16" viewBox="0 0 16 16" ><path d="M1.500 4.500 h6 M1.500 7.500 h8 M1.500 10.500 h11 M1.500 13.500 h8" stroke="#6c707e" stroke-width="1"/><circle cx="12" cy="4.500" r="3.500" fill="#3574f0"/><path d="M12 2.800 v1.900 h1.500" fill="none" stroke="#fff" stroke-width="1"/></svg></div>
<div class="t" style="left:93.3px;top:854px;"><span style="letter-spacing:-0.168px;">Scratches and Consoles</span></div>
<div class="abs" style="left:83px;top:519px;width:144px;height:18px;border:4px solid #e9494f;border-radius:2px;"></div>
<div class="abs" style="left:496px;top:40px;width:1px;height:963px;background:#ebecf0;"></div>
<div class="abs" style="left:497px;top:40px;width:1383px;height:963px;background:#fff;"></div>
<div class="abs" style="left:497px;top:40px;width:1383px;height:42px;background:#fff;"></div>
<div class="abs" style="left:497px;top:81px;width:1383px;height:1px;background:#ebecf0;"></div>
<div class="abs" style="left:1386px;top:41px;width:493px;height:3px;background:#b4b4b4;"></div>
<div class="abs" style="left:987px;top:41px;width:268px;height:40px;background:#fdf8e8;"></div>
<div class="tab" style="left:502.5px;"><span style="position:absolute;left:-6px;width:5px;overflow:hidden;direction:rtl;color:#b0b3bd;">C</span><span style="letter-spacing:-0.073px;">onfig.java</span></div>
<div class="ic" style="left:600px;top:53px;opacity:.720;"><svg width="16" height="16" viewBox="0 0 16 16" ><path d="M9 14.300 a6.500 6.500 0 1 1 5.300 -8" fill="none" stroke="#3574f0"/><path d="M9.500 9.500 a2.800 2.800 0 1 1 .3 -3.600" fill="none" stroke="#3574f0" stroke-width="1.100" stroke-linecap="round"/><path d="M10.300 2 l2.400 .3 l-.4 2.400" fill="none" stroke="#5a9a61" stroke-width="1"/><circle cx="12.500" cy="12.400" r="4.300" fill="#ffffff" stroke="none"/><path d="M10.900 9.700 a3.200 3.200 0 1 0 3.200 0" fill="none" stroke="#5a9a61" stroke-width="1.100" stroke-linecap="round"/><path d="M12.500 8.500 v3.600" stroke="#5a9a61" stroke-width="1.100" stroke-linecap="round"/></svg></div>
<div class="tab" style="left:621px;"><span style="letter-spacing:-0.109px;">RuoYiApplication.java</span></div>
<div class="ic" style="left:787px;top:53px;opacity:.720;"><svg width="16" height="16" viewBox="0 0 16 16" ><circle cx="8" cy="8" r="6.500" fill="#edf3ff" stroke="#3574f0"/><path d="M10.300 9.800 a2.900 2.900 0 1 1 0 -3.600" fill="none" stroke="#3574f0" stroke-width="1.100" stroke-linecap="round"/></svg></div>
<div class="tab" style="left:808px;"><span style="letter-spacing:-0.146px;">RuoYiServletInitializer.java</span></div>
<div class="ic" style="left:1000px;top:53px;opacity:.720;"><svg width="16" height="16" viewBox="0 0 16 16" ><circle cx="8" cy="8" r="6.500" fill="#edf3ff" stroke="#3574f0"/><path d="M10.300 9.800 a2.900 2.900 0 1 1 0 -3.600" fill="none" stroke="#3574f0" stroke-width="1.100" stroke-linecap="round"/></svg></div>
<div class="tab" style="left:1021.2px;"><span style="letter-spacing:-0.067px;">DataSourceAutoConfiguration.class</span></div>
<div class="ic" style="left:1267px;top:53px;opacity:.720;"><svg width="16" height="16" viewBox="0 0 16 16" ><circle cx="8" cy="8" r="6.500" fill="#edf3ff" stroke="#3574f0"/><path d="M10.300 9.800 a2.900 2.900 0 1 1 0 -3.600" fill="none" stroke="#3574f0" stroke-width="1.100" stroke-linecap="round"/></svg></div>
<div class="tab" style="left:1288.3px;"><span style="letter-spacing:-0.120px;">CacheController.java</span></div>
<div class="ic" style="left:1449px;top:53px;opacity:.720;"><svg width="16" height="16" viewBox="0 0 16 16" ><path d="M13.300 2 C11.500 4.800 9 5.600 6 5.800 C3 6 1.200 7.600 1.200 9.800 C1.200 12.300 3.300 13.700 6 13.600 H9 M13.300 2 C14.300 3.800 14.600 5.800 14.200 7.800" fill="none" stroke="#45996a" stroke-width="1.150" stroke-linecap="round" stroke-linejoin="round"/><path d="M2.200 14.400 C3.800 12.700 5.600 12 8.200 11.700" fill="none" stroke="#45996a" stroke-width="1.050" stroke-linecap="round"/><circle cx="12.500" cy="12.400" r="4.300" fill="#ffffff" stroke="none"/><path d="M10.900 9.700 a3.200 3.200 0 1 0 3.200 0" fill="none" stroke="#6c707e" stroke-width="1.100" stroke-linecap="round"/><path d="M12.500 8.500 v3.600" stroke="#6c707e" stroke-width="1.100" stroke-linecap="round"/></svg></div>
<div class="tab" style="left:1470.3px;"><span style="letter-spacing:0.158px;">application-druid.yml</span></div>
<div class="ic" style="left:1635px;top:53px;"><svg width="17" height="16" viewBox="0 0 17 16" ><text x="0" y="13" font-family='"Liberation Sans",sans-serif' font-style="italic" font-size="18" fill="#3e6fe0" textLength="16" lengthAdjust="spacingAndGlyphs">m</text></svg></div>
<div class="tab" style="left:1656.700px;color:#000;"><span style="letter-spacing:0.073px;">pom.xml (qmc-admin)</span></div>
<div class="ic" style="left:1791px;top:53px;"><svg width="16" height="16" viewBox="0 0 16 16" ><path d='M4.500 4.500 L11.500 11.500 M11.500 4.500 L4.500 11.500' stroke='#818594' stroke-width='1'/></svg></div>
<div class="abs" style="left:1623px;top:78px;width:191px;height:3px;border-radius:1.500px;background:#3574f0;"></div>
<div class="ic" style="left:1826px;top:53px;"><svg width="16" height="16" viewBox="0 0 16 16" ><path d='M3.500 6 L8 10.500 L12.500 6' fill='none' stroke='#6c707e' stroke-width='1.200'/></svg></div>
<div class="abs" style="left:1859px;top:56px;width:2px;height:2px;border-radius:50%;background:#6c707e;"></div>
<div class="abs" style="left:1859px;top:61px;width:2px;height:2px;border-radius:50%;background:#6c707e;"></div>
<div class="abs" style="left:1859px;top:66px;width:2px;height:2px;border-radius:50%;background:#6c707e;"></div>
<div class="abs" style="left:655px;top:216px;width:1224px;height:26px;background:#fdf3d5;"></div>
<div class="abs" style="left:583px;top:242px;width:1296px;height:52px;background:#fdf3d5;"></div>
<div class="abs" style="left:583px;top:294px;width:188px;height:26px;background:#fdf3d5;"></div>
<div class="abs" style="left:655px;top:372px;width:1224px;height:26px;background:#fdf3d5;"></div>
<div class="abs" style="left:583px;top:398px;width:1296px;height:52px;background:#fdf3d5;"></div>
<div class="abs" style="left:583px;top:450px;width:188px;height:26px;background:#fdf3d5;"></div>
<div class="abs" style="left:497px;top:736px;width:1383px;height:26px;background:#f4f7fd;"></div>
<div class="abs" style="left:580px;top:135px;width:1px;height:868px;background:#ebecf0;"></div>
<div class="abs" style="left:1663px;top:135px;width:1px;height:868px;background:#ebecf0;"></div>
<div class="abs" style="left:616px;top:138px;width:1px;height:624px;background:#ebecf0;"></div>
<div class="abs" style="left:653px;top:242px;width:1px;height:52px;background:#ebecf0;"></div>
<div class="abs" style="left:653px;top:398px;width:1px;height:52px;background:#ebecf0;"></div>
<div class="abs" style="left:653px;top:554px;width:1px;height:52px;background:#ebecf0;"></div>
<div class="abs" style="left:652px;top:658px;width:1px;height:78px;background:#7fb9aa;"></div>
<div class="abs" style="left:616px;top:840px;width:1px;height:182px;background:#ebecf0;"></div>
<div class="abs" style="left:652px;top:866px;width:1px;height:156px;background:#ebecf0;"></div>
<div class="abs" style="left:688px;top:892px;width:1px;height:130px;background:#ebecf0;"></div>
<div class="abs" style="left:724px;top:996px;width:1px;height:26px;background:#ebecf0;"></div>
<div class="abs" style="left:655px;top:632px;width:108px;height:26px;background:#d2ecec;"></div>
<div class="abs" style="left:655px;top:632px;width:9px;height:26px;background:#8fd3cb;"></div>
<div class="abs" style="left:655px;top:736px;width:117px;height:26px;background:#d2ecec;"></div>
<div class="abs" style="left:763px;top:736px;width:9px;height:26px;background:#8fd3cb;"></div>
<div class="ln" style="top:138px;">44</div>
<div class="code" style="top:138px;">        &lt;/<span class="tg">dependency</span>&gt;</div>
<div class="ln" style="top:164px;">45</div>
<div class="ln" style="top:190px;">46</div>
<div class="code" style="top:190px;">        <span class="cm">&lt;!-- <span class="cj">核心模块</span>--&gt;</span></div>
<div class="ln" style="top:216px;">47</div>
<div class="code" style="top:216px;">        &lt;<span class="tg">dependency</span>&gt;</div>
<div class="ln" style="top:242px;">48</div>
<div class="code" style="top:242px;">            &lt;<span class="tg">groupId</span>&gt;com.qmc&lt;/<span class="tg">groupId</span>&gt;</div>
<div class="ln" style="top:268px;">49</div>
<div class="code" style="top:268px;">            &lt;<span class="tg">artifactId</span>&gt;qmc-framework&lt;/<span class="tg">artifactId</span>&gt;</div>
<div class="ln" style="top:294px;">50</div>
<div class="code" style="top:294px;">        &lt;/<span class="tg">dependency</span>&gt;</div>
<div class="ln" style="top:320px;">51</div>
<div class="ln" style="top:346px;">52</div>
<div class="code" style="top:346px;">        <span class="cm">&lt;!-- <span class="cj">定时任务</span>--&gt;</span></div>
<div class="ln" style="top:372px;">53</div>
<div class="code" style="top:372px;">        &lt;<span class="tg">dependency</span>&gt;</div>
<div class="ln" style="top:398px;">54</div>
<div class="code" style="top:398px;">            &lt;<span class="tg">groupId</span>&gt;com.qmc&lt;/<span class="tg">groupId</span>&gt;</div>
<div class="ln" style="top:424px;">55</div>
<div class="code" style="top:424px;">            &lt;<span class="tg">artifactId</span>&gt;qmc-quartz&lt;/<span class="tg">artifactId</span>&gt;</div>
<div class="ln" style="top:450px;">56</div>
<div class="code" style="top:450px;">        &lt;/<span class="tg">dependency</span>&gt;</div>
<div class="ln" style="top:476px;">57</div>
<div class="ln" style="top:502px;">58</div>
<div class="code" style="top:502px;">        <span class="cm">&lt;!-- <span class="cj">代码生成</span>--&gt;</span></div>
<div class="ln" style="top:528px;">59</div>
<div class="code" style="top:528px;">        &lt;<span class="tg">dependency</span>&gt;</div>
<div class="ln" style="top:554px;">60</div>
<div class="code" style="top:554px;">            &lt;<span class="tg">groupId</span>&gt;com.qmc&lt;/<span class="tg">groupId</span>&gt;</div>
<div class="ln" style="top:580px;">61</div>
<div class="code" style="top:580px;">            &lt;<span class="tg">artifactId</span>&gt;qmc-generator&lt;/<span class="tg">artifactId</span>&gt;</div>
<div class="ln" style="top:606px;">62</div>
<div class="code" style="top:606px;">        &lt;/<span class="tg">dependency</span>&gt;</div>
<div class="ln" style="top:632px;">63</div>
<div class="code" style="top:632px;">        &lt;<span class="tg">dependency</span>&gt;</div>
<div class="ln" style="top:658px;">64</div>
<div class="code" style="top:658px;">            &lt;<span class="tg">groupId</span>&gt;com.github.binarywang&lt;/<span class="tg">groupId</span>&gt;</div>
<div class="ln" style="top:684px;">65</div>
<div class="code" style="top:684px;">            &lt;<span class="tg">artifactId</span>&gt;wx-java-mp-spring-boot-starter&lt;/<span class="tg">artifactId</span>&gt;</div>
<div class="ln" style="top:710px;">66</div>
<div class="code" style="top:710px;">            &lt;<span class="tg">version</span>&gt;4.7.0&lt;/<span class="tg">version</span>&gt;</div>
<div class="ln" style="top:736px;color:#6c707e;">67</div>
<div class="code" style="top:736px;">        &lt;/<span class="tg">dependency</span>&gt;</div>
<div class="ln" style="top:762px;">68</div>
<div class="code" style="top:762px;">    &lt;/<span class="tg">dependencies</span>&gt;</div>
<div class="ln" style="top:788px;">69</div>
<div class="ln" style="top:814px;">70</div>
<div class="code" style="top:814px;">    &lt;<span class="tg">build</span>&gt;</div>
<div class="ln" style="top:840px;">71</div>
<div class="code" style="top:840px;">        &lt;<span class="tg">plugins</span>&gt;</div>
<div class="ln" style="top:866px;">72</div>
<div class="code" style="top:866px;">            &lt;<span class="tg">plugin</span>&gt;</div>
<div class="ln" style="top:892px;">73</div>
<div class="code" style="top:892px;">                &lt;<span class="tg">groupId</span>&gt;org.springframework.boot&lt;/<span class="tg">groupId</span>&gt;</div>
<div class="ln" style="top:918px;">74</div>
<div class="code" style="top:918px;">                &lt;<span class="tg">artifactId</span>&gt;spring-boot-maven-plugin&lt;/<span class="tg">artifactId</span>&gt;</div>
<div class="ln" style="top:944px;">75</div>
<div class="code" style="top:944px;">                &lt;<span class="tg">version</span>&gt;2.5.15&lt;/<span class="tg">version</span>&gt;</div>
<div class="ln" style="top:970px;">76</div>
<div class="code" style="top:970px;">                &lt;<span class="tg">configuration</span>&gt;</div>
<div class="ic" style="left:543px;top:219px;width:22px;height:18px;"><svg width="22" height="18" viewBox="0 0 22 18" ><circle cx='8.500' cy='9.500' r='5.700' fill='#edf3ff' stroke='#3f6fe0' stroke-width='1.200'/><circle cx='8.500' cy='9.500' r='2.700' fill='#f4f8ff' stroke='#3f6fe0' stroke-width='1.200'/><path d='M13 6.500 h5.500 v6 h-5.500 z' fill='#fff' stroke='none' opacity='0'/><path d='M15.700 11 v-9.200 M13.200 4.300 l2.500 -2.700 l2.500 2.700' fill='none' stroke='#d9434f' stroke-width='1.300' stroke-linejoin='round'/></svg></div>
<div class="ic" style="left:543px;top:375px;width:22px;height:18px;"><svg width="22" height="18" viewBox="0 0 22 18" ><circle cx='8.500' cy='9.500' r='5.700' fill='#edf3ff' stroke='#3f6fe0' stroke-width='1.200'/><circle cx='8.500' cy='9.500' r='2.700' fill='#f4f8ff' stroke='#3f6fe0' stroke-width='1.200'/><path d='M13 6.500 h5.500 v6 h-5.500 z' fill='#fff' stroke='none' opacity='0'/><path d='M15.700 11 v-9.200 M13.200 4.300 l2.500 -2.700 l2.500 2.700' fill='none' stroke='#d9434f' stroke-width='1.300' stroke-linejoin='round'/></svg></div>
<div class="ic" style="left:543px;top:531px;width:22px;height:18px;"><svg width="22" height="18" viewBox="0 0 22 18" ><circle cx='8.500' cy='9.500' r='5.700' fill='#edf3ff' stroke='#3f6fe0' stroke-width='1.200'/><circle cx='8.500' cy='9.500' r='2.700' fill='#f4f8ff' stroke='#3f6fe0' stroke-width='1.200'/><path d='M13 6.500 h5.500 v6 h-5.500 z' fill='#fff' stroke='none' opacity='0'/><path d='M15.700 11 v-9.200 M13.200 4.300 l2.500 -2.700 l2.500 2.700' fill='none' stroke='#d9434f' stroke-width='1.300' stroke-linejoin='round'/></svg></div>
<div class="ic" style="left:589px;top:740px;"><svg width="16" height="16" viewBox="0 0 16 16" ><path d='M8 1.500 a4.800 4.800 0 0 1 2.800 8.700 v1.300 h-5.600 v-1.300 a4.800 4.800 0 0 1 2.800 -8.700 z' fill='#f5a81c'/><path d='M5.700 13 h4.600 M6.300 14.800 h3.400' stroke='#6c707e' stroke-width='1'/></svg></div>
<div class="abs" style="left:497px;top:82px;width:1383px;height:52px;background:#fff;"></div>
<div class="abs" style="left:497px;top:134px;width:1383px;height:1px;background:#e4e5ea;"></div>
<div class="abs" style="left:497px;top:135px;width:1383px;height:3px;background:linear-gradient(#f1f2f4,#fff);"></div>
<div class="ln" style="top:81px;">2</div>
<div class="ln" style="top:107px;">18</div>
<div class="code" style="top:81px;">&lt;<span class="tg">project</span> <span class="an">xmlns</span><span class="av">="http://maven.apache.org/POM/4.0.0"</span></div>
<div class="code" style="top:108px;">    &lt;<span class="tg">dependencies</span>&gt;</div>
<div class="abs" style="left:746px;top:111px;width:126px;height:22px;border-radius:4px;background:#f8f9fa;"></div>
<div class="ic" style="left:751.500px;top:114px;"><svg width="16" height="16" viewBox="0 0 16 16" ><path d='M13.300 2 C11.500 4.800 9 5.600 6 5.800 C3 6 1.200 7.600 1.200 9.800 C1.200 12.300 3.300 13.700 6.500 13.600 C11.500 13.400 15.300 9 13.300 2 M2.200 14.400 C3.800 12.700 5.600 12 8.200 11.700' fill='none' stroke='#8a8d98' stroke-width='1.100' stroke-linecap='round' stroke-linejoin='round'/></svg></div>
<div class="t" style="left:772.900px;top:110px;font-size:14.500px;color:#818594;"><span style="letter-spacing:-0.071px;">Add Starters...</span></div>
<div class="ic" style="left:1801px;top:88px;width:14px;height:14px;"><svg width="14" height="14" viewBox="0 0 14 14" ><path d='M7 1.200 L13.300 12.500 H0.700 Z' fill='#f2b33a' stroke='#f2b33a' stroke-width='1' stroke-linejoin='round'/><path d='M7 5 v4' stroke='#fff' stroke-width='1.600'/><circle cx='7' cy='11' r='.9' fill='#fff'/></svg></div>
<div class="t" style="left:1817px;top:83px;font-size:12.500px;color:#5a5d6b;">20</div>
<div class="ic" style="left:1838px;top:87px;"><svg width="16" height="16" viewBox="0 0 16 16" ><path d='M4.500 9.500 L8 6 L11.500 9.500' fill='none' stroke='#6c707e' stroke-width='1.100'/></svg></div>
<div class="ic" style="left:1859px;top:87px;"><svg width="16" height="16" viewBox="0 0 16 16" ><path d='M4.500 6.500 L8 10 L11.500 6.500' fill='none' stroke='#6c707e' stroke-width='1.100'/></svg></div>
<div class="abs" style="left:1869px;top:455px;width:10px;height:302px;background:#e1e2e4;"></div>
<div class="abs" style="left:1865px;top:278px;width:14px;height:33px;background:#ecb64b;"></div>
<div class="abs" style="left:1865px;top:337px;width:14px;height:25px;background:#ecb64b;"></div>
<div class="abs" style="left:1865px;top:499px;width:14px;height:25px;background:#ecb64b;"></div>
<div class="abs" style="left:1865px;top:550px;width:14px;height:25px;background:#ecb64b;"></div>
<div class="abs" style="left:623px;top:632px;width:646px;height:128px;border:4px solid #ec4d55;border-radius:2px;"></div>
<div class="abs" style="left:1880px;top:40px;width:40px;height:963px;background:#f7f8fa;"></div>
<div class="abs" style="left:1880px;top:40px;width:1px;height:963px;background:#ebecf0;"></div>
<div class="ic" style="left:1890px;top:50px;width:20px;height:20px;"><svg width="20" height="20" viewBox="0 0 20 20" ><path d='M10 2.500 a5.500 5.500 0 0 1 5.500 5.500 v3.500 l1.800 3 h-14.600 l1.800 -3 v-3.500 a5.500 5.500 0 0 1 5.500 -5.500 z M8 17 a2 2 0 0 0 4 0' fill='none' stroke='#6c707e' stroke-width='1.300' stroke-linejoin='round'/><circle cx='16' cy='4' r='3' fill='#e5484d'/></svg></div>
<div class="ic" style="left:1890px;top:91px;width:20px;height:20px;"><svg width="20" height="20" viewBox="0 0 20 20" ><path d='M9.10 10.26 L8.79 10.14 L8.54 9.93 L8.36 9.65 L8.26 9.31 L8.26 8.94 L8.36 8.54 L8.58 8.15 L8.91 7.79 L9.35 7.48 L9.88 7.25 L10.48 7.10 L11.15 7.07 L11.84 7.15 L12.53 7.37 L13.18 7.71 L13.77 8.18 L14.27 8.77 L14.64 9.45 L14.86 10.22 L14.91 11.03 L14.78 11.87 L14.46 12.70 L13.95 13.49 L13.25 14.19 L12.39 14.79 L11.39 15.25 L10.27 15.54 L9.08 15.64 L7.86 15.55 L6.65 15.25 L5.49 14.74 L4.44 14.03 L3.54 13.14 L2.82 12.10 L2.33 10.93 L2.09 9.67 L2.13 8.37 L2.44 7.07 L3.04 5.82 L3.91 4.67 M10.90 9.74 L11.21 9.86 L11.46 10.07 L11.64 10.35 L11.74 10.69 L11.74 11.06 L11.64 11.46 L11.42 11.85 L11.09 12.21 L10.65 12.52 L10.12 12.75 L9.52 12.90 L8.85 12.93 L8.16 12.85 L7.47 12.63 L6.82 12.29 L6.23 11.82 L5.73 11.23 L5.36 10.55 L5.14 9.78 L5.09 8.97 L5.22 8.13 L5.54 7.30 L6.05 6.51 L6.75 5.81 L7.61 5.21 L8.61 4.75 L9.73 4.46 L10.92 4.36 L12.14 4.45 L13.35 4.75 L14.51 5.26 L15.56 5.97 L16.46 6.86 L17.18 7.90 L17.67 9.07 L17.91 10.33 L17.87 11.63 L17.56 12.93 L16.96 14.18 L16.09 15.33' fill='none' stroke='#6c707e' stroke-width='1.300' stroke-linecap='round' stroke-linejoin='round'/></svg></div>
<div class="ic" style="left:1890px;top:131px;width:20px;height:20px;"><svg width="20" height="20" viewBox="0 0 20 20" ><ellipse cx='10' cy='5' rx='7' ry='2.800' fill='none' stroke='#6c707e' stroke-width='1.300'/><path d='M3 5 v10 c0 1.500 3 2.800 7 2.800 s7 -1.300 7 -2.800 v-10 M3 8.300 c0 1.500 3 2.800 7 2.800 s7 -1.300 7 -2.800 M3 11.700 c0 1.500 3 2.800 7 2.800 s7 -1.300 7 -2.800' fill='none' stroke='#6c707e' stroke-width='1.300'/></svg></div>
<div class="abs" style="left:1890.500px;top:167px;width:22px;height:24px;line-height:24px;font-style:italic;font-size:24px;color:#5a5d6b;transform:scaleX(0.950);transform-origin:left;">m</div>
<div class="abs" style="left:1888px;top:206px;width:24px;height:1px;background:#d3d5db;"></div>
<div class="ic" style="left:1890px;top:222px;width:20px;height:20px;"><svg width="20" height="20" viewBox="0 0 20 20" ><rect x='2' y='0.500' width='7' height='7' fill='#5a5d6b'/><rect x='12' y='11' width='8' height='7' fill='#5a5d6b'/><path d='M5.500 9 l5 5.500 l-5 5.500 l-5 -5.500 z' fill='#5a5d6b'/><path d='M5.500 7 v3 M9 14.500 h4' stroke='#5a5d6b' stroke-width='1.200'/></svg></div>
<div class="abs" style="left:1911px;top:949px;width:6px;height:49px;border:1.500px solid #4b4e58;border-radius:4px;background:#eef3fb;"></div>
<div class="abs" style="left:1913.500px;top:968px;width:4px;height:29px;border-radius:2px;background:linear-gradient(#a8c8f8,#3f7fe8);"></div>
<div class="abs" style="left:0;top:1003px;width:1920px;height:29px;background:#f7f8fa;"></div>
<div class="abs" style="left:0;top:1002.500px;width:1920px;height:1px;background:#ebecf0;"></div>
<div class="abs" style="left:14px;top:1013px;width:6px;height:6px;border:1px solid #3574f0;border-radius:2px;"></div>
<div class="t" style="left:26.400px;top:1004px;color:#6c707e;font-size:12.500px;"><span style="letter-spacing:-0.446px;">WxGzh</span></div>
<div class="ic" style="left:70px;top:1008px;"><svg width="16" height="16" viewBox="0 0 16 16" ><path d="M6.400 4.300 L10.100 8 L6.400 11.700" fill="none" stroke="#9da0a8" stroke-width="1.150" stroke-linecap="round" stroke-linejoin="round"/></svg></div>
<div class="abs" style="left:90px;top:1013px;width:6px;height:6px;border:1px solid #3574f0;border-radius:2px;"></div>
<div class="t" style="left:102.300px;top:1004px;color:#6c707e;font-size:12.500px;"><span style="letter-spacing:0.341px;">gzh-admin</span></div>
<div class="ic" style="left:168px;top:1008px;"><svg width="16" height="16" viewBox="0 0 16 16" ><path d="M6.400 4.300 L10.100 8 L6.400 11.700" fill="none" stroke="#9da0a8" stroke-width="1.150" stroke-linecap="round" stroke-linejoin="round"/></svg></div>
<div class="ic" style="left:188px;top:1008px;"><svg width="17" height="16" viewBox="0 0 17 16" ><text x="0" y="13" font-family='"Liberation Sans",sans-serif' font-style="italic" font-size="18" fill="#3e6fe0" textLength="16" lengthAdjust="spacingAndGlyphs">m</text></svg></div>
<div class="t" style="left:208.500px;top:1004px;color:#6c707e;font-size:12.500px;"><span style="letter-spacing:0.328px;">pom.xml</span></div>
<div class="t" style="left:1674.100px;top:1004px;color:#6c707e;font-size:12.500px;"><span style="letter-spacing:-0.145px;">67:22</span></div>
<div class="t" style="left:1721.200px;top:1004px;color:#6c707e;font-size:12.500px;"><span style="letter-spacing:-0.800px;">CRLF</span></div>
<div class="t" style="left:1765.300px;top:1004px;color:#6c707e;font-size:12.500px;"><span style="letter-spacing:-0.430px;">UTF-8</span></div>
<div class="t" style="left:1818.900px;top:1004px;color:#6c707e;font-size:12.500px;"><span style="letter-spacing:0.124px;">4 spaces</span></div>
<div class="ic" style="left:1887px;top:1008px;"><svg width="16" height="16" viewBox="0 0 16 16" ><rect x='2.500' y='7.500' width='9' height='6.500' rx='1.200' fill='none' stroke='#6c707e' stroke-width='1.100'/><path d='M9 7.500 v-2 a2.500 2.500 0 0 1 5 0 v1' fill='none' stroke='#6c707e' stroke-width='1.100'/><circle cx='7' cy='10.700' r='.9' fill='#6c707e'/></svg></div>
<div class="abs" style="left:1513px;top:972px;height:34px;line-height:34px;white-space:nowrap;font-size:25px;color:#fff;text-shadow:1px 1px 2px rgba(0,0,0,.700),0 0 1.500px rgba(0,0,0,.600),1px 2px 3px rgba(0,0,0,.350);">掘金技术社区</div>
<div class="abs" style="left:1669px;top:972px;height:34px;line-height:34px;white-space:nowrap;font-size:24px;color:#fff;text-shadow:1px 1px 2px rgba(0,0,0,.700),0 0 1.500px rgba(0,0,0,.600),1px 2px 3px rgba(0,0,0,.350);">@</div>
<div class="abs" style="left:1699px;top:972px;height:34px;line-height:34px;white-space:nowrap;font-size:26px;color:#fff;text-shadow:1px 1px 2px rgba(0,0,0,.700),0 0 1.500px rgba(0,0,0,.600),1px 2px 3px rgba(0,0,0,.350);"><span style="letter-spacing:0.014px;">LaughingDangZi</span></div>
</body></html>
